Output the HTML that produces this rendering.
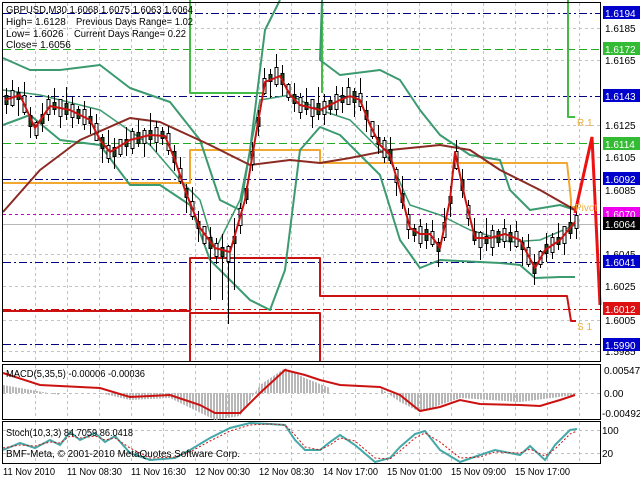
<!DOCTYPE html>
<html><head><meta charset="utf-8"><style>
html,body{margin:0;padding:0;background:#fff;width:640px;height:480px;overflow:hidden}
svg{display:block}
text{font-family:"Liberation Sans",sans-serif;font-size:10px}
</style></head><body>
<svg width="640" height="480" viewBox="0 0 640 480" xmlns="http://www.w3.org/2000/svg">
<defs>
<pattern id="hp" width="3" height="10" patternUnits="userSpaceOnUse"><rect x="0" y="0" width="2" height="10" fill="#b8b8b8"/></pattern>
</defs>
<rect width="640" height="480" fill="#fff"/>
<g stroke="#c4c4c4" stroke-dasharray="3,3" fill="none">
<path d="M35.5 3V362M67.5 3V362M99.5 3V362M131.5 3V362M163.5 3V362M195.5 3V362M227.5 3V362M259.5 3V362M291.5 3V362M323.5 3V362M355.5 3V362M387.5 3V362M419.5 3V362M451.5 3V362M483.5 3V362M515.5 3V362M547.5 3V362M579.5 3V362"/>
<path d="M35.5 365V420M67.5 365V420M99.5 365V420M131.5 365V420M163.5 365V420M195.5 365V420M227.5 365V420M259.5 365V420M291.5 365V420M323.5 365V420M355.5 365V420M387.5 365V420M419.5 365V420M451.5 365V420M483.5 365V420M515.5 365V420M547.5 365V420M579.5 365V420"/>
<path d="M35.5 422V463M67.5 422V463M99.5 422V463M131.5 422V463M163.5 422V463M195.5 422V463M227.5 422V463M259.5 422V463M291.5 422V463M323.5 422V463M355.5 422V463M387.5 422V463M419.5 422V463M451.5 422V463M483.5 422V463M515.5 422V463M547.5 422V463M579.5 422V463"/>
<path d="M3 28.5H600M3 60.5H600M3 125.5H600M3 157.5H600M3 190.5H600M3 254.5H600M3 286.5H600M3 320.5H600M3 351.5H600"/>
</g>
<g fill="none" stroke-width="1">
<path d="M3 13.5H600M3 96.5H600M3 179.5H600M3 262.5H600M3 344.5H600" stroke="#000080" stroke-dasharray="8,3,2,3"/>
<path d="M3 49.5H600M3 143.5H600" stroke="#22aa22" stroke-dasharray="8,4"/>
<path d="M3 214.5H600" stroke="#cc00cc" stroke-dasharray="3,3"/>
<path d="M3 309.5H600" stroke="#cc0000" stroke-dasharray="8,3,2,3"/>
<path d="M3 224.5H600" stroke="#b8b8b8"/>
</g>
<g fill="none" stroke-width="2" stroke-linejoin="round">
<path d="M190 0V93H265M322 0V93" stroke="#44bb44"/>
<path d="M568 0V117H575" stroke="#44bb44"/>
<path d="M3 183H190V150H320V163H567L571 200V207H576" stroke="#f0a830"/>
<path d="M3 311H190V258H320V296H567L571 321H576M190 362V313H320V362" stroke="#cc1111"/>
<path d="M3 58L30 70L60 70L100 65L130 88L170 102L200 140L220 200L240 210L250 150L265 30L280 0M322 0L320 60L340 75L380 70L400 80L420 110L440 135L455 145L470 155L500 160L510 190L530 210L560 205L575 210" stroke="#3c9a70"/>
<path d="M3 125L30 115L60 140L100 145L130 185L160 185L190 205L210 260L230 280L250 300L270 310L285 270L300 150L320 127L340 135L380 175L400 240L420 268L440 260L480 262L500 263L520 265L535 278L560 277L575 277" stroke="#3c9a70"/>
<path d="M3 90L40 95L100 110L150 145L180 180L200 200L215 250L240 200L260 100L290 95L320 110L350 120L370 140L390 160L410 205L440 215L470 230L510 242L540 240L575 225" stroke="#3c9a70" stroke-width="1.5"/>
<path d="M3 212L40 170L80 140L130 118L160 122L210 145L250 165L290 160L320 163L350 158L390 150L440 145L470 150L500 170L540 190L575 210" stroke="#8b2a22"/>
</g>
<!-- candle wicks -->
<path fill="none" stroke="#000" stroke-width="1" d="M6.5 88V114M12.5 80V107M18.5 87V116M24.5 82V115M30.5 107V138M36.5 121V139M42.5 103V132M48.5 95V121M54.5 88V115M60.5 99V128M66.5 87V120M72.5 97V128M78.5 106V124M84.5 101V130M90.5 108V134M96.5 114V141M102.5 134V163M108.5 130V163M114.5 138V169M120.5 139V157M126.5 127V156M132.5 128V154M138.5 120V147M144.5 128V157M150.5 113V146M156.5 121V152M162.5 127V145M168.5 126V155M174.5 145V171M180.5 157V184M186.5 184V213M192.5 187V220M198.5 211V242M204.5 227V245M210.5 227V300M216.5 238V264M222.5 234V300M228.5 245V324M234.5 218V290M240.5 203V234M246.5 186V204M252.5 142V171M258.5 110V136M264.5 68V95M270.5 69V98M276.5 54V87M282.5 65V96M288.5 83V101M294.5 83V112M300.5 93V119M306.5 88V115M312.5 99V128M318.5 87V120M324.5 94V125M330.5 97V115M336.5 86V115M342.5 87V113M348.5 78V105M354.5 88V117M360.5 78V111M366.5 101V132M372.5 121V139M378.5 125V154M384.5 137V163M390.5 137V164M396.5 167V196M402.5 176V209M408.5 208V239M414.5 224V242M420.5 219V248M426.5 223V249M432.5 220V247M438.5 238V267M444.5 208V241M450.5 186V217M456.5 140V170M462.5 169V198M468.5 200V226M474.5 218V245M480.5 231V260M486.5 218V251M492.5 225V256M498.5 229V247M504.5 219V248M510.5 225V251M516.5 221V248M522.5 237V266M528.5 234V267M534.5 254V285M540.5 250V268M546.5 233V262M552.5 233V259M558.5 223V250M564.5 226V255M570.5 206V239M576.5 208V239"/>
<!-- candle bodies outline -->
<path fill="none" stroke="#000" stroke-width="4" d="M6.5 95V105M12.5 90V106M18.5 92V100M24.5 95V113M30.5 115V127M36.5 122V136M42.5 114V124M48.5 99V115M54.5 102V110M60.5 99V117M66.5 103V115M72.5 104V118M78.5 109V119M84.5 109V125M90.5 116V124M96.5 123V141M102.5 137V149M108.5 145V159M114.5 147V157M120.5 139V155M126.5 139V147M132.5 131V149M138.5 132V144M144.5 130V144M150.5 130V140M156.5 127V143M162.5 131V139M168.5 133V151M174.5 151V163M180.5 168V182M186.5 188V198M192.5 201V217M198.5 221V229M204.5 226V244M210.5 237V249M216.5 243V257M222.5 247V257M228.5 246V262M234.5 236V244M240.5 208V226M246.5 188V200M252.5 151V165M258.5 117V127M264.5 78V94M270.5 74V82M276.5 67V85M282.5 73V85M288.5 84V98M294.5 94V104M300.5 97V113M306.5 102V110M312.5 99V117M318.5 103V115M324.5 101V115M330.5 100V110M336.5 94V110M342.5 95V103M348.5 87V105M354.5 91V103M360.5 93V107M366.5 110V120M372.5 121V137M378.5 137V145M384.5 140V158M390.5 149V161M396.5 169V183M402.5 193V203M408.5 214V230M414.5 228V236M420.5 226V244M426.5 229V241M432.5 231V245M438.5 242V252M444.5 222V238M450.5 196V204M456.5 151V169M462.5 179V191M468.5 205V219M474.5 231V241M480.5 232V248M486.5 236V244M492.5 230V248M498.5 231V243M504.5 228V242M510.5 232V242M516.5 231V247M522.5 242V250M528.5 247V265M534.5 262V274M540.5 251V265M546.5 244V254M552.5 237V253M558.5 237V245M564.5 226V244M570.5 222V234M576.5 215V229"/>
<!-- dark bodies (even) -->
<path fill="none" stroke="#1e4a1e" stroke-width="2" d="M6.5 96V104M18.5 93V99M30.5 116V126M42.5 115V123M54.5 103V109M66.5 104V114M78.5 110V118M90.5 117V123M102.5 138V148M114.5 148V156M126.5 140V146M138.5 133V143M150.5 131V139M162.5 132V138M174.5 152V162M186.5 189V197M198.5 222V228M210.5 238V248M222.5 248V256M234.5 237V243M246.5 189V199M258.5 118V126M270.5 75V81M282.5 74V84M294.5 95V103M306.5 103V109M318.5 104V114M330.5 101V109M342.5 96V102M354.5 92V102M366.5 111V119M378.5 138V144M390.5 150V160M402.5 194V202M414.5 229V235M426.5 230V240M438.5 243V251M450.5 197V203M462.5 180V190M474.5 232V240M486.5 237V243M498.5 232V242M510.5 233V241M522.5 243V249M534.5 263V273M546.5 245V253M558.5 238V244M570.5 223V233"/>
<!-- white bodies (odd) -->
<path fill="none" stroke="#fff" stroke-width="2" d="M12.5 91V105M24.5 96V112M36.5 123V135M48.5 100V114M60.5 100V116M72.5 105V117M84.5 110V124M96.5 124V140M108.5 146V158M120.5 140V154M132.5 132V148M144.5 131V143M156.5 128V142M168.5 134V150M180.5 169V181M192.5 202V216M204.5 227V243M216.5 244V256M228.5 247V261M240.5 209V225M252.5 152V164M264.5 79V93M276.5 68V84M288.5 85V97M300.5 98V112M312.5 100V116M324.5 102V114M336.5 95V109M348.5 88V104M360.5 94V106M372.5 122V136M384.5 141V157M396.5 170V182M408.5 215V229M420.5 227V243M432.5 232V244M444.5 223V237M456.5 152V168M468.5 206V218M480.5 233V247M492.5 231V247M504.5 229V241M516.5 232V246M528.5 248V264M540.5 252V264M552.5 238V252M564.5 227V243M576.5 216V228"/>
<path fill="none" stroke="#cc1111" stroke-width="2" stroke-linejoin="round" d="M5 100L20 95L35 128L50 106L70 110L90 120L100 140L110 152L130 140L150 135L165 136L175 160L185 190L200 228L215 248L230 252L245 200L255 140L265 82L280 76L290 95L300 105L320 110L340 100L350 96L360 100L370 125L380 145L390 155L400 190L410 228L420 234L430 234L440 248L450 200L455 152L465 198L475 238L490 238L505 234L520 240L535 268L545 250L560 240L575 222"/>
<path d="M575 213L592 137L600 305" fill="none" stroke="#ee1111" stroke-width="3"/>
<text x="577" y="126" fill="#e8b040">R 1</text>
<text x="575" y="211" fill="#e8b040">Pivot</text>
<text x="577" y="330" fill="#e8b040">S 1</text>
<text x="6" y="13" fill="#000" textLength="187" lengthAdjust="spacingAndGlyphs">GBPUSD,M30  1.6068 1.6075 1.6063 1.6064</text>
<text x="6" y="25" fill="#000">High= 1.6128</text><text x="76" y="25" fill="#000" textLength="117" lengthAdjust="spacingAndGlyphs">Previous Days Range= 1.02</text>
<text x="6" y="37" fill="#000">Low= 1.6026</text><text x="74" y="37" fill="#000" textLength="112" lengthAdjust="spacingAndGlyphs">Current Days Range= 0.22</text>
<text x="6" y="48" fill="#000">Close= 1.6056</text>
<g fill="none" stroke="#000" stroke-width="1">
<rect x="2.5" y="2.5" width="598" height="359"/>
<rect x="2.5" y="364.5" width="598" height="55"/>
<rect x="2.5" y="421.5" width="598" height="42"/>
</g>
<g fill="#000">
<text x="605" y="32">1.6185</text><text x="605" y="64">1.6165</text><text x="605" y="129">1.6125</text>
<text x="605" y="161">1.6105</text><text x="605" y="194">1.6085</text><text x="605" y="258">1.6045</text>
<text x="605" y="290">1.6025</text><text x="605" y="324">1.6005</text><text x="605" y="355">1.5985</text>
</g>
<g>
<rect x="603" y="6" width="37" height="13" fill="#0000cc"/><text x="605" y="17" fill="#fff">1.6194</text>
<rect x="603" y="42" width="37" height="13" fill="#33bb33"/><text x="605" y="53" fill="#fff">1.6172</text>
<rect x="603" y="89" width="37" height="13" fill="#0000cc"/><text x="605" y="100" fill="#fff">1.6143</text>
<rect x="603" y="137" width="37" height="13" fill="#33bb33"/><text x="605" y="148" fill="#fff">1.6114</text>
<rect x="603" y="172" width="37" height="13" fill="#0000cc"/><text x="605" y="183" fill="#fff">1.6092</text>
<rect x="603" y="207" width="37" height="13" fill="#ee00ee"/><text x="605" y="218" fill="#fff">1.6070</text>
<rect x="603" y="217" width="37" height="13" fill="#000"/><text x="605" y="228" fill="#fff">1.6064</text>
<rect x="603" y="255" width="37" height="13" fill="#0000cc"/><text x="605" y="266" fill="#fff">1.6041</text>
<rect x="603" y="302" width="37" height="13" fill="#dd1111"/><text x="605" y="313" fill="#fff">1.6012</text>
<rect x="603" y="338" width="37" height="13" fill="#0000cc"/><text x="605" y="349" fill="#fff">1.5990</text>
</g>
<path d="M3 393.5H600" stroke="#c0c0c0" stroke-dasharray="3,3"/>
<path fill="url(#hp)" d="M3 393L3 385L60 395L60 393L100 393L130 400L170 398L215 420L240 416L260 385L285 368L305 378L330 388L330 393L380 393L380 388L400 402L420 412L460 398L520 402L575 395L575 393Z"/>
<path d="M3 373L40 385L100 388L130 397L170 395L200 405L215 413L240 413L260 393L285 370L305 375L320 380L340 385L360 386L380 387L400 395L420 411L440 407L460 400L480 404L520 405L540 406L560 400L575 395" fill="none" stroke="#cc1111" stroke-width="2"/>
<text x="6" y="377" fill="#000" textLength="139" lengthAdjust="spacingAndGlyphs">MACD(5,35,5) -0.00006 -0.00036</text>
<text x="604" y="374" fill="#000">0.00547</text><text x="604" y="397" fill="#000">0.00</text><text x="602" y="417" fill="#000">-0.00492</text>
<path d="M3 430.5H600M3 453.5H600" stroke="#c0c0c0" stroke-dasharray="3,3"/>
<path d="M3 450L20 443L35 448L50 440L60 445L70 432L80 440L95 433L105 442L115 436L130 453L150 460L175 458L190 450L210 438L230 428L250 423L270 424L285 425L295 440L305 450L320 450L330 442L340 435L355 445L375 462L390 458L400 447L415 434L425 431L440 450L460 462L480 455L495 450L520 455L530 446L545 460L555 445L570 430L577 429" fill="none" stroke="#44a8a8" stroke-width="2"/>
<path d="M3 448L20 445L35 446L50 442L60 443L70 436L80 438L95 436L105 440L115 438L130 448L150 458L175 457L190 452L210 441L230 431L250 425L270 424L285 425L295 435L305 447L320 450L330 445L340 438L355 441L375 458L390 459L400 451L415 438L425 433L440 442L460 458L480 457L495 452L520 453L530 449L545 456L555 449L570 434L577 431" fill="none" stroke="#cc1111" stroke-dasharray="2,2"/>
<text x="6" y="436" fill="#000" textLength="127" lengthAdjust="spacingAndGlyphs">Stoch(10,3,3) 84.7059 86.0418</text>
<text x="6" y="457" fill="#000" textLength="234" lengthAdjust="spacingAndGlyphs">BMF-Meta, © 2001-2010 MetaQuotes Software Corp.</text>
<text x="602" y="434" fill="#000">100</text><text x="602" y="457" fill="#000">20</text>
<g fill="#000">
<text x="3" y="475" textLength="52" lengthAdjust="spacingAndGlyphs">11 Nov 2010</text><text x="67" y="475" textLength="55" lengthAdjust="spacingAndGlyphs">11 Nov 08:30</text><text x="131" y="475" textLength="55" lengthAdjust="spacingAndGlyphs">11 Nov 16:30</text>
<text x="195" y="475" textLength="55" lengthAdjust="spacingAndGlyphs">12 Nov 00:30</text><text x="259" y="475" textLength="55" lengthAdjust="spacingAndGlyphs">12 Nov 08:30</text><text x="323" y="475" textLength="55" lengthAdjust="spacingAndGlyphs">14 Nov 17:00</text>
<text x="387" y="475" textLength="55" lengthAdjust="spacingAndGlyphs">15 Nov 01:00</text><text x="451" y="475" textLength="55" lengthAdjust="spacingAndGlyphs">15 Nov 09:00</text><text x="515" y="475" textLength="55" lengthAdjust="spacingAndGlyphs">15 Nov 17:00</text>
</g>
</svg>
</body></html>
